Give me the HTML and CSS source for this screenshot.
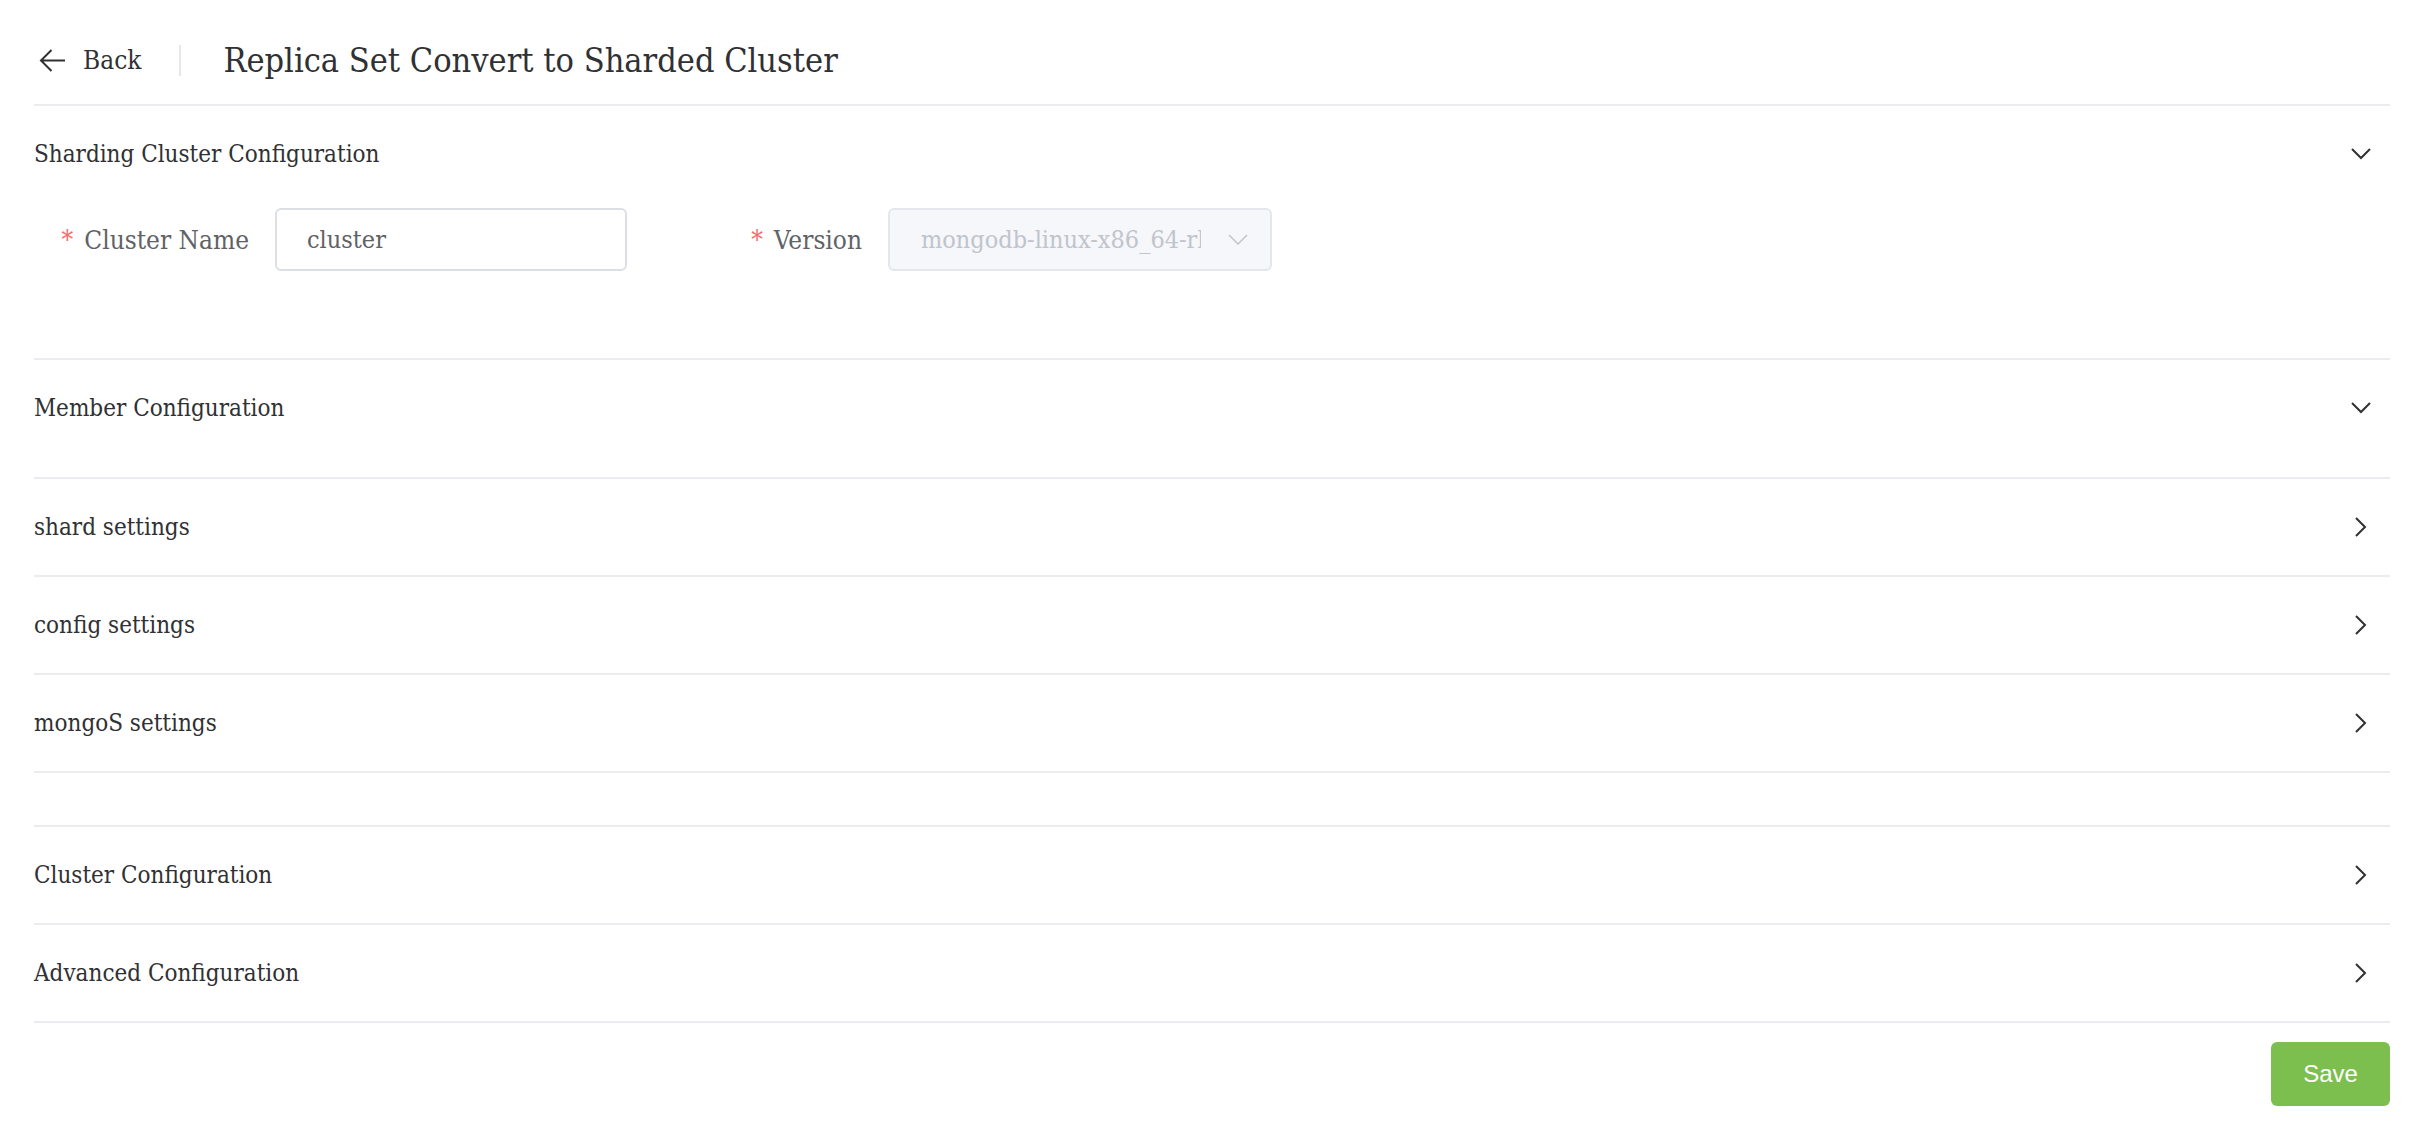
FILE: index.html
```html
<!DOCTYPE html>
<html lang="en">
<head>
<meta charset="utf-8">
<title>Replica Set Convert to Sharded Cluster</title>
<link rel="stylesheet" href="styles.css">
</head>
<body>
<div class="page">
  <header class="page-header">
    <a class="back">
      <svg class="back-icon" width="26" height="23" viewBox="0 0 26 23"><path d="M2 11.5H26M12.5 1L2 11.5L12.5 22" fill="none" stroke="#303133" stroke-width="2"/></svg>
      <span class="back-text">Back</span>
    </a>
    <span class="divider"></span>
    <h1 class="title">Replica Set Convert to Sharded Cluster</h1>
  </header>

  <section class="collapse-item">
    <div class="collapse-header">
      <span>Sharding Cluster Configuration</span>
      <svg class="chev" width="20" height="20" viewBox="0 0 20 20"><path d="M1 5L10 14L19 5" fill="none" stroke="#303133" stroke-width="2"/></svg>
    </div>
    <div class="collapse-content form-content">
      <div class="form-row">
        <div class="form-item">
          <label class="form-label label-1"><span class="req">*</span>Cluster Name</label>
          <div class="input">cluster</div>
        </div>
        <div class="form-item item-2">
          <label class="form-label label-2"><span class="req">*</span>Version</label>
          <div class="select">
            <span class="select-text">mongodb-linux-x86_64-rhel70-4.0.3</span>
            <svg class="select-arrow" width="20" height="11" viewBox="0 0 20 11"><path d="M1 1L10 10L19 1" fill="none" stroke="#c0c4cc" stroke-width="1.5"/></svg>
          </div>
        </div>
      </div>
    </div>
  </section>

  <section class="collapse-item">
    <div class="collapse-header">
      <span>Member Configuration</span>
      <svg class="chev" width="20" height="20" viewBox="0 0 20 20"><path d="M1 5L10 14L19 5" fill="none" stroke="#303133" stroke-width="2"/></svg>
    </div>
    <div class="collapse-content member-content">
      <div class="nested">
        <div class="collapse-header row">
          <span>shard settings</span>
          <svg class="chev" width="20" height="20" viewBox="0 0 20 20"><path d="M5 1L14 10L5 19" fill="none" stroke="#303133" stroke-width="2"/></svg>
        </div>
        <div class="collapse-header row">
          <span>config settings</span>
          <svg class="chev" width="20" height="20" viewBox="0 0 20 20"><path d="M5 1L14 10L5 19" fill="none" stroke="#303133" stroke-width="2"/></svg>
        </div>
        <div class="collapse-header row">
          <span>mongoS settings</span>
          <svg class="chev" width="20" height="20" viewBox="0 0 20 20"><path d="M5 1L14 10L5 19" fill="none" stroke="#303133" stroke-width="2"/></svg>
        </div>
      </div>
    </div>
  </section>

  <section class="collapse-item">
    <div class="collapse-header row">
      <span>Cluster Configuration</span>
      <svg class="chev" width="20" height="20" viewBox="0 0 20 20"><path d="M5 1L14 10L5 19" fill="none" stroke="#303133" stroke-width="2"/></svg>
    </div>
  </section>

  <section class="collapse-item">
    <div class="collapse-header row">
      <span>Advanced Configuration</span>
      <svg class="chev" width="20" height="20" viewBox="0 0 20 20"><path d="M5 1L14 10L5 19" fill="none" stroke="#303133" stroke-width="2"/></svg>
    </div>
  </section>

  <div class="actions">
    <button class="btn-save">Save</button>
  </div>
</div>
</body>
</html>
```

FILE: styles.css
```css
* { box-sizing: border-box; }

html, body {
  margin: 0;
  padding: 0;
  background: #ffffff;
}

body {
  font-family: "DejaVu Serif Condensed", "DejaVu Serif", "Liberation Serif", serif;
  font-stretch: condensed;
  color: #303133;
}

.page {
  padding: 0 36px 0 34px;
}

.page-header {
  display: flex;
  align-items: center;
  height: 106px;
  padding-top: 16px;
  border-bottom: 2px solid #ebebf0;
}

.back {
  display: flex;
  align-items: center;
  margin-left: 5px;
  color: #303133;
}

.back-icon {
  display: block;
}

.back-text {
  margin-left: 18px;
  font-size: 26px;
}

.divider {
  width: 2px;
  height: 31px;
  background: #e4e7ed;
  margin-left: 38px;
}

.title {
  margin: 0 0 0 42px;
  font-size: 34px;
  font-weight: normal;
  color: #303133;
}

.collapse-header {
  display: flex;
  align-items: center;
  justify-content: space-between;
  height: 96px;
  font-size: 24px;
  color: #303133;
}

.collapse-header.row {
  border-bottom: 2px solid #ebebf0;
  height: 98px;
}

.chev {
  display: block;
  margin-right: 19px;
}

.collapse-content {
  border-bottom: 2px solid #ebebf0;
}

.form-content {
  padding: 6px 0 87px;
}

.member-content {
  padding: 21px 0 52px;
}

.nested {
  border-top: 2px solid #ebebf0;
}

.form-row {
  display: flex;
  align-items: center;
}

.form-item {
  display: flex;
  align-items: center;
}

.item-2 {
  margin-left: 15px;
}

.form-label {
  text-align: right;
  padding-right: 26px;
  font-size: 26px;
  color: #606266;
  white-space: nowrap;
}

.label-1 { width: 241px; }
.label-2 { width: 246px; }

.req {
  color: #f56c6c;
  margin-right: 11px;
}

.input {
  width: 352px;
  height: 63px;
  border: 2px solid #dcdfe6;
  border-radius: 6px;
  padding: 0 30px;
  display: flex;
  align-items: center;
  font-size: 25px;
  color: #606266;
  background: #fff;
}

.select {
  width: 384px;
  height: 63px;
  border: 2px solid #e4e7ed;
  border-radius: 6px;
  background: #f5f7fa;
  display: flex;
  align-items: center;
  padding: 0 22px 0 31px;
  font-size: 25px;
  color: #c0c4cc;
}

.select-text {
  flex: 1;
  overflow: hidden;
  white-space: nowrap;
  margin-right: 27px;
}

.select-arrow {
  display: block;
  flex: none;
}

.actions {
  display: flex;
  justify-content: flex-end;
  padding-top: 19px;
}

.btn-save {
  width: 119px;
  height: 64px;
  border: none;
  border-radius: 6px;
  background: #7cbf4f;
  color: #ffffff;
  font-family: "Liberation Sans", Arial, sans-serif;
  font-size: 24px;
  cursor: pointer;
}
```
